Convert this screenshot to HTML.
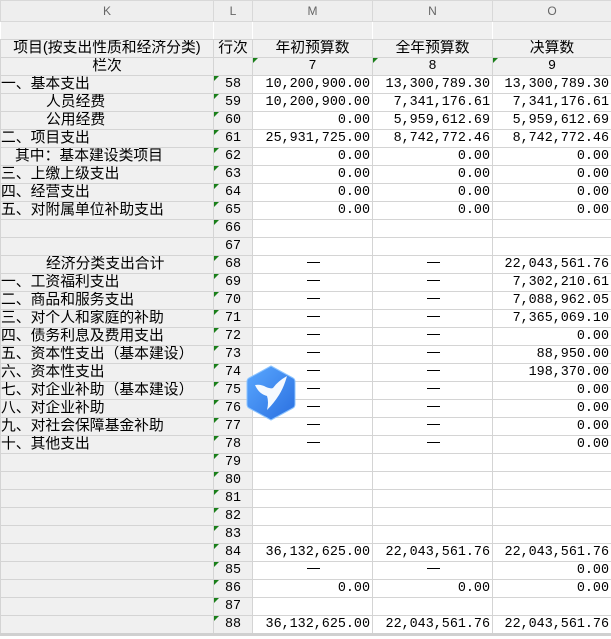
<!DOCTYPE html>
<html><head><meta charset="utf-8"><style>
html,body{margin:0;padding:0;background:#fff;width:611px;height:639px;overflow:hidden}
.w{position:absolute;left:0;top:0;width:611px}
table{border-collapse:collapse;table-layout:fixed;width:611px;font-family:"Liberation Mono","Noto Sans CJK SC",monospace;font-size:13.4px;color:#000}
td{height:17px;padding:0;border:1px solid #d4d4d4;white-space:nowrap;overflow:hidden;line-height:17px;position:relative}
tr.h td{height:20px;background:#eeeeee;color:#666;text-align:center;font-family:"Liberation Sans",sans-serif;font-size:12px;border-color:#d8d8d8}
.k{background:#f0f0f0;font-family:"Liberation Sans","Noto Sans CJK SC",sans-serif;font-size:14.8px;text-align:left}
.l{background:#f0f0f0;text-align:center}
.g{background:#f0f0f0}
.r{text-align:right;padding-right:2px}
.c{text-align:center}
.c::after{content:"";display:block;position:absolute;left:50%;top:6px;width:13px;margin-left:-6px;height:1.3px;background:#000}
.n{text-align:center}
.cj{font-family:"Liberation Sans","Noto Sans CJK SC",sans-serif;font-size:14.8px;text-align:center}
.t::before{content:"";position:absolute;left:0;top:0;border-top:5px solid #1a7f1a;border-right:5px solid transparent}
tr.e td{border-left-color:transparent;border-right-color:transparent}
.bot{position:absolute;left:0;top:633px;width:611px;height:3px;background:#d0d0d0}
</style></head><body>
<div class="w">
<table>
<colgroup><col style="width:213px"><col style="width:39px"><col style="width:120px"><col style="width:120px"><col style="width:119px"></colgroup>
<tr class="h"><td>K</td><td>L</td><td>M</td><td>N</td><td>O</td></tr>
<tr class="e"><td class="g"></td><td class="g"></td><td class="g"></td><td class="g"></td><td class="g"></td></tr>
<tr><td class="k" style="text-align:center">项目(按支出性质和经济分类)</td><td class="l cj">行次</td><td class="g cj">年初预算数</td><td class="g cj">全年预算数</td><td class="g cj">决算数</td></tr>
<tr><td class="k" style="text-align:center">栏次</td><td class="l"></td><td class="g n t">7</td><td class="g n t">8</td><td class="g n t">9</td></tr>
<tr><td class="k">一、基本支出</td><td class="l t">58</td><td class="r">10,200,900.00</td><td class="r">13,300,789.30</td><td class="r">13,300,789.30</td></tr>
<tr><td class="k" style="padding-left:45px">人员经费</td><td class="l t">59</td><td class="r">10,200,900.00</td><td class="r">7,341,176.61</td><td class="r">7,341,176.61</td></tr>
<tr><td class="k" style="padding-left:45px">公用经费</td><td class="l t">60</td><td class="r">0.00</td><td class="r">5,959,612.69</td><td class="r">5,959,612.69</td></tr>
<tr><td class="k">二、项目支出</td><td class="l t">61</td><td class="r">25,931,725.00</td><td class="r">8,742,772.46</td><td class="r">8,742,772.46</td></tr>
<tr><td class="k" style="padding-left:14px">其中：基本建设类项目</td><td class="l t">62</td><td class="r">0.00</td><td class="r">0.00</td><td class="r">0.00</td></tr>
<tr><td class="k">三、上缴上级支出</td><td class="l t">63</td><td class="r">0.00</td><td class="r">0.00</td><td class="r">0.00</td></tr>
<tr><td class="k">四、经营支出</td><td class="l t">64</td><td class="r">0.00</td><td class="r">0.00</td><td class="r">0.00</td></tr>
<tr><td class="k">五、对附属单位补助支出</td><td class="l t">65</td><td class="r">0.00</td><td class="r">0.00</td><td class="r">0.00</td></tr>
<tr><td class="k"></td><td class="l t">66</td><td></td><td></td><td></td></tr>
<tr><td class="k"></td><td class="l">67</td><td></td><td></td><td></td></tr>
<tr><td class="k" style="padding-left:45px">经济分类支出合计</td><td class="l t">68</td><td class="c"></td><td class="c"></td><td class="r">22,043,561.76</td></tr>
<tr><td class="k">一、工资福利支出</td><td class="l t">69</td><td class="c"></td><td class="c"></td><td class="r">7,302,210.61</td></tr>
<tr><td class="k">二、商品和服务支出</td><td class="l t">70</td><td class="c"></td><td class="c"></td><td class="r">7,088,962.05</td></tr>
<tr><td class="k">三、对个人和家庭的补助</td><td class="l t">71</td><td class="c"></td><td class="c"></td><td class="r">7,365,069.10</td></tr>
<tr><td class="k">四、债务利息及费用支出</td><td class="l t">72</td><td class="c"></td><td class="c"></td><td class="r">0.00</td></tr>
<tr><td class="k">五、资本性支出（基本建设）</td><td class="l t">73</td><td class="c"></td><td class="c"></td><td class="r">88,950.00</td></tr>
<tr><td class="k">六、资本性支出</td><td class="l t">74</td><td class="c"></td><td class="c"></td><td class="r">198,370.00</td></tr>
<tr><td class="k">七、对企业补助（基本建设）</td><td class="l t">75</td><td class="c"></td><td class="c"></td><td class="r">0.00</td></tr>
<tr><td class="k">八、对企业补助</td><td class="l t">76</td><td class="c"></td><td class="c"></td><td class="r">0.00</td></tr>
<tr><td class="k">九、对社会保障基金补助</td><td class="l t">77</td><td class="c"></td><td class="c"></td><td class="r">0.00</td></tr>
<tr><td class="k">十、其他支出</td><td class="l t">78</td><td class="c"></td><td class="c"></td><td class="r">0.00</td></tr>
<tr><td class="k"></td><td class="l t">79</td><td></td><td></td><td></td></tr>
<tr><td class="k"></td><td class="l t">80</td><td></td><td></td><td></td></tr>
<tr><td class="k"></td><td class="l t">81</td><td></td><td></td><td></td></tr>
<tr><td class="k"></td><td class="l t">82</td><td></td><td></td><td></td></tr>
<tr><td class="k"></td><td class="l t">83</td><td></td><td></td><td></td></tr>
<tr><td class="k"></td><td class="l t">84</td><td class="r">36,132,625.00</td><td class="r">22,043,561.76</td><td class="r">22,043,561.76</td></tr>
<tr><td class="k"></td><td class="l t">85</td><td class="c"></td><td class="c"></td><td class="r">0.00</td></tr>
<tr><td class="k"></td><td class="l t">86</td><td class="r">0.00</td><td class="r">0.00</td><td class="r">0.00</td></tr>
<tr><td class="k"></td><td class="l t">87</td><td></td><td></td><td></td></tr>
<tr><td class="k"></td><td class="l t">88</td><td class="r">36,132,625.00</td><td class="r">22,043,561.76</td><td class="r">22,043,561.76</td></tr>
</table>
</div>
<div class="bot"></div>
<svg style="position:absolute;left:246px;top:365px" width="50" height="56" viewBox="0 0 50 56">
<defs><linearGradient id="gb" x1="0" y1="0" x2="1" y2="1"><stop offset="0" stop-color="#5aa8ff"/><stop offset="1" stop-color="#2a6fe0"/></linearGradient></defs>
<path d="M25 1 L47 13 Q49 14 49 17 L49 39 Q49 42 47 43 L25 55 L3 43 Q1 42 1 39 L1 17 Q1 14 3 13 Z" fill="url(#gb)" stroke="#8cc4ff" stroke-width="1"/>
<path d="M9 20 Q15 19 20 22 Q25 24 27 23 Q32 16 41 11 Q38 22 33 30 Q28 38 21 45 Q23 37 21 31 Q13 29 9 20 Z" fill="#fff" opacity="0.95"/>
</svg>
</body></html>
